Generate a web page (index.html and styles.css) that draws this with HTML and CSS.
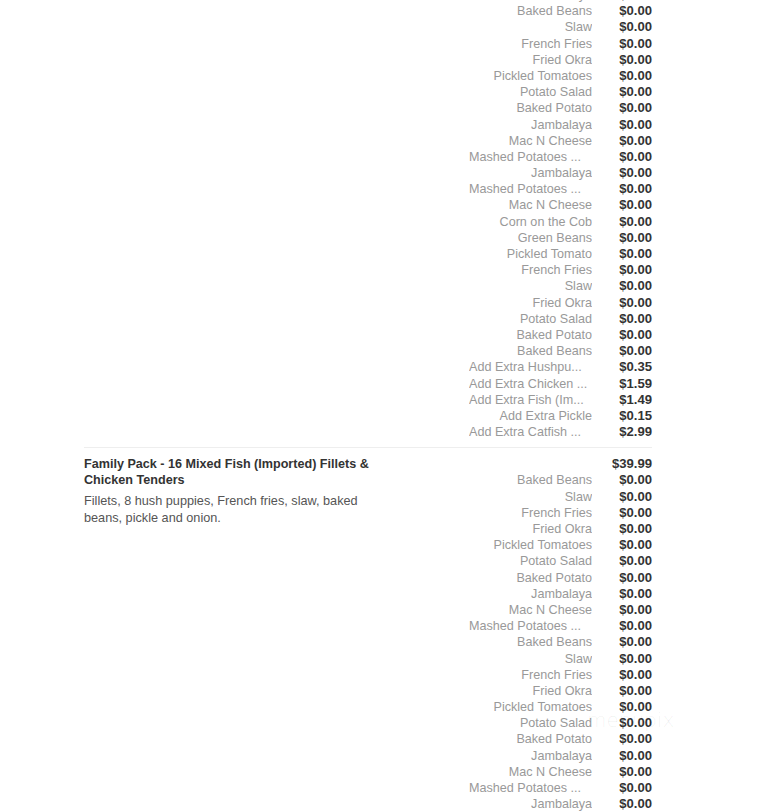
FILE: index.html
```html
<!DOCTYPE html>
<html>
<head>
<meta charset="utf-8">
<link rel="stylesheet" href="styles.css">
</head>
<body>
<div class="page">
  <section class="item">
    <div class="info"></div>
    <div class="opts">
      <div class="row"><span class="name">Jambalaya</span><span class="price">$0.00</span></div>
      <div class="row"><span class="name">Baked Beans</span><span class="price">$0.00</span></div>
      <div class="row"><span class="name">Slaw</span><span class="price">$0.00</span></div>
      <div class="row"><span class="name">French Fries</span><span class="price">$0.00</span></div>
      <div class="row"><span class="name">Fried Okra</span><span class="price">$0.00</span></div>
      <div class="row"><span class="name">Pickled Tomatoes</span><span class="price">$0.00</span></div>
      <div class="row"><span class="name">Potato Salad</span><span class="price">$0.00</span></div>
      <div class="row"><span class="name">Baked Potato</span><span class="price">$0.00</span></div>
      <div class="row"><span class="name">Jambalaya</span><span class="price">$0.00</span></div>
      <div class="row"><span class="name">Mac N Cheese</span><span class="price">$0.00</span></div>
      <div class="row"><span class="name cut">Mashed Potatoes ...</span><span class="price">$0.00</span></div>
      <div class="row"><span class="name">Jambalaya</span><span class="price">$0.00</span></div>
      <div class="row"><span class="name cut">Mashed Potatoes ...</span><span class="price">$0.00</span></div>
      <div class="row"><span class="name">Mac N Cheese</span><span class="price">$0.00</span></div>
      <div class="row"><span class="name">Corn on the Cob</span><span class="price">$0.00</span></div>
      <div class="row"><span class="name">Green Beans</span><span class="price">$0.00</span></div>
      <div class="row"><span class="name">Pickled Tomato</span><span class="price">$0.00</span></div>
      <div class="row"><span class="name">French Fries</span><span class="price">$0.00</span></div>
      <div class="row"><span class="name">Slaw</span><span class="price">$0.00</span></div>
      <div class="row"><span class="name">Fried Okra</span><span class="price">$0.00</span></div>
      <div class="row"><span class="name">Potato Salad</span><span class="price">$0.00</span></div>
      <div class="row"><span class="name">Baked Potato</span><span class="price">$0.00</span></div>
      <div class="row"><span class="name">Baked Beans</span><span class="price">$0.00</span></div>
      <div class="row"><span class="name cut">Add Extra Hushpu...</span><span class="price">$0.35</span></div>
      <div class="row"><span class="name cut">Add Extra Chicken ...</span><span class="price">$1.59</span></div>
      <div class="row"><span class="name cut">Add Extra Fish (Im...</span><span class="price">$1.49</span></div>
      <div class="row"><span class="name">Add Extra Pickle</span><span class="price">$0.15</span></div>
      <div class="row"><span class="name cut">Add Extra Catfish ...</span><span class="price">$2.99</span></div>
    </div>
  </section>
  <hr class="divider">
  <section class="item">
    <div class="info">
      <h3 class="title">Family Pack - 16 Mixed Fish (Imported) Fillets &amp; Chicken Tenders</h3>
      <p class="desc">Fillets, 8 hush puppies, French fries, slaw, baked beans, pickle and onion.</p>
    </div>
    <div class="opts">
      <div class="row"><span class="name"></span><span class="price">$39.99</span></div>
      <div class="row"><span class="name">Baked Beans</span><span class="price">$0.00</span></div>
      <div class="row"><span class="name">Slaw</span><span class="price">$0.00</span></div>
      <div class="row"><span class="name">French Fries</span><span class="price">$0.00</span></div>
      <div class="row"><span class="name">Fried Okra</span><span class="price">$0.00</span></div>
      <div class="row"><span class="name">Pickled Tomatoes</span><span class="price">$0.00</span></div>
      <div class="row"><span class="name">Potato Salad</span><span class="price">$0.00</span></div>
      <div class="row"><span class="name">Baked Potato</span><span class="price">$0.00</span></div>
      <div class="row"><span class="name">Jambalaya</span><span class="price">$0.00</span></div>
      <div class="row"><span class="name">Mac N Cheese</span><span class="price">$0.00</span></div>
      <div class="row"><span class="name cut">Mashed Potatoes ...</span><span class="price">$0.00</span></div>
      <div class="row"><span class="name">Baked Beans</span><span class="price">$0.00</span></div>
      <div class="row"><span class="name">Slaw</span><span class="price">$0.00</span></div>
      <div class="row"><span class="name">French Fries</span><span class="price">$0.00</span></div>
      <div class="row"><span class="name">Fried Okra</span><span class="price">$0.00</span></div>
      <div class="row"><span class="name">Pickled Tomatoes</span><span class="price">$0.00</span></div>
      <div class="row"><span class="name">Potato Salad</span><span class="price">$0.00</span></div>
      <div class="row"><span class="name">Baked Potato</span><span class="price">$0.00</span></div>
      <div class="row"><span class="name">Jambalaya</span><span class="price">$0.00</span></div>
      <div class="row"><span class="name">Mac N Cheese</span><span class="price">$0.00</span></div>
      <div class="row"><span class="name cut">Mashed Potatoes ...</span><span class="price">$0.00</span></div>
      <div class="row"><span class="name">Jambalaya</span><span class="price">$0.00</span></div>
      <div class="row"><span class="name">Mac N Cheese</span><span class="price">$0.00</span></div>
    </div>
    <div class="watermark">menupix</div>
  </section>
</div>
</body>
</html>
```
FILE: styles.css
```css
html, body {
  margin: 0;
  padding: 0;
  background: #fff;
}
body {
  font-family: "Liberation Sans", Arial, sans-serif;
  font-size: 12.6px;
  color: #333;
  overflow: hidden;
  height: 812px;
}
.page {
  width: 568px;
  margin: -13px 0 0 84px;
}
.item {
  position: relative;
  display: flex;
  align-items: flex-start;
}
.info {
  width: 300px;
  flex: none;
  margin-right: auto;
}
.opts {
  width: 183px;
  flex: none;
}
.row {
  display: flex;
  height: 16.2px;
  line-height: 16.2px;
}
.name {
  width: 123px;
  flex: none;
  color: #999;
  text-align: right;
  white-space: nowrap;
  overflow: hidden;
}
.name.cut {
  text-align: left;
}
.price {
  flex: 1;
  text-align: right;
  font-size: 13.1px;
  font-weight: bold;
  color: #333;
}
.divider {
  border: 0;
  border-top: 1px solid #eee;
  margin: 7px 0 8px;
  height: 0;
}
.title {
  margin: 0;
  font-size: 12.6px;
  line-height: 16.2px;
  font-weight: bold;
  color: #333;
}
.desc {
  margin: 4px 0 0;
  font-size: 12.7px;
  line-height: 17px;
  color: #555;
}
.watermark {
  position: absolute;
  left: 503px;
  top: 252px;
  font-size: 20px;
  color: rgba(0, 0, 0, 0.07);
  font-family: "DejaVu Sans", sans-serif;
  font-weight: 200;
  pointer-events: none;
}
```
